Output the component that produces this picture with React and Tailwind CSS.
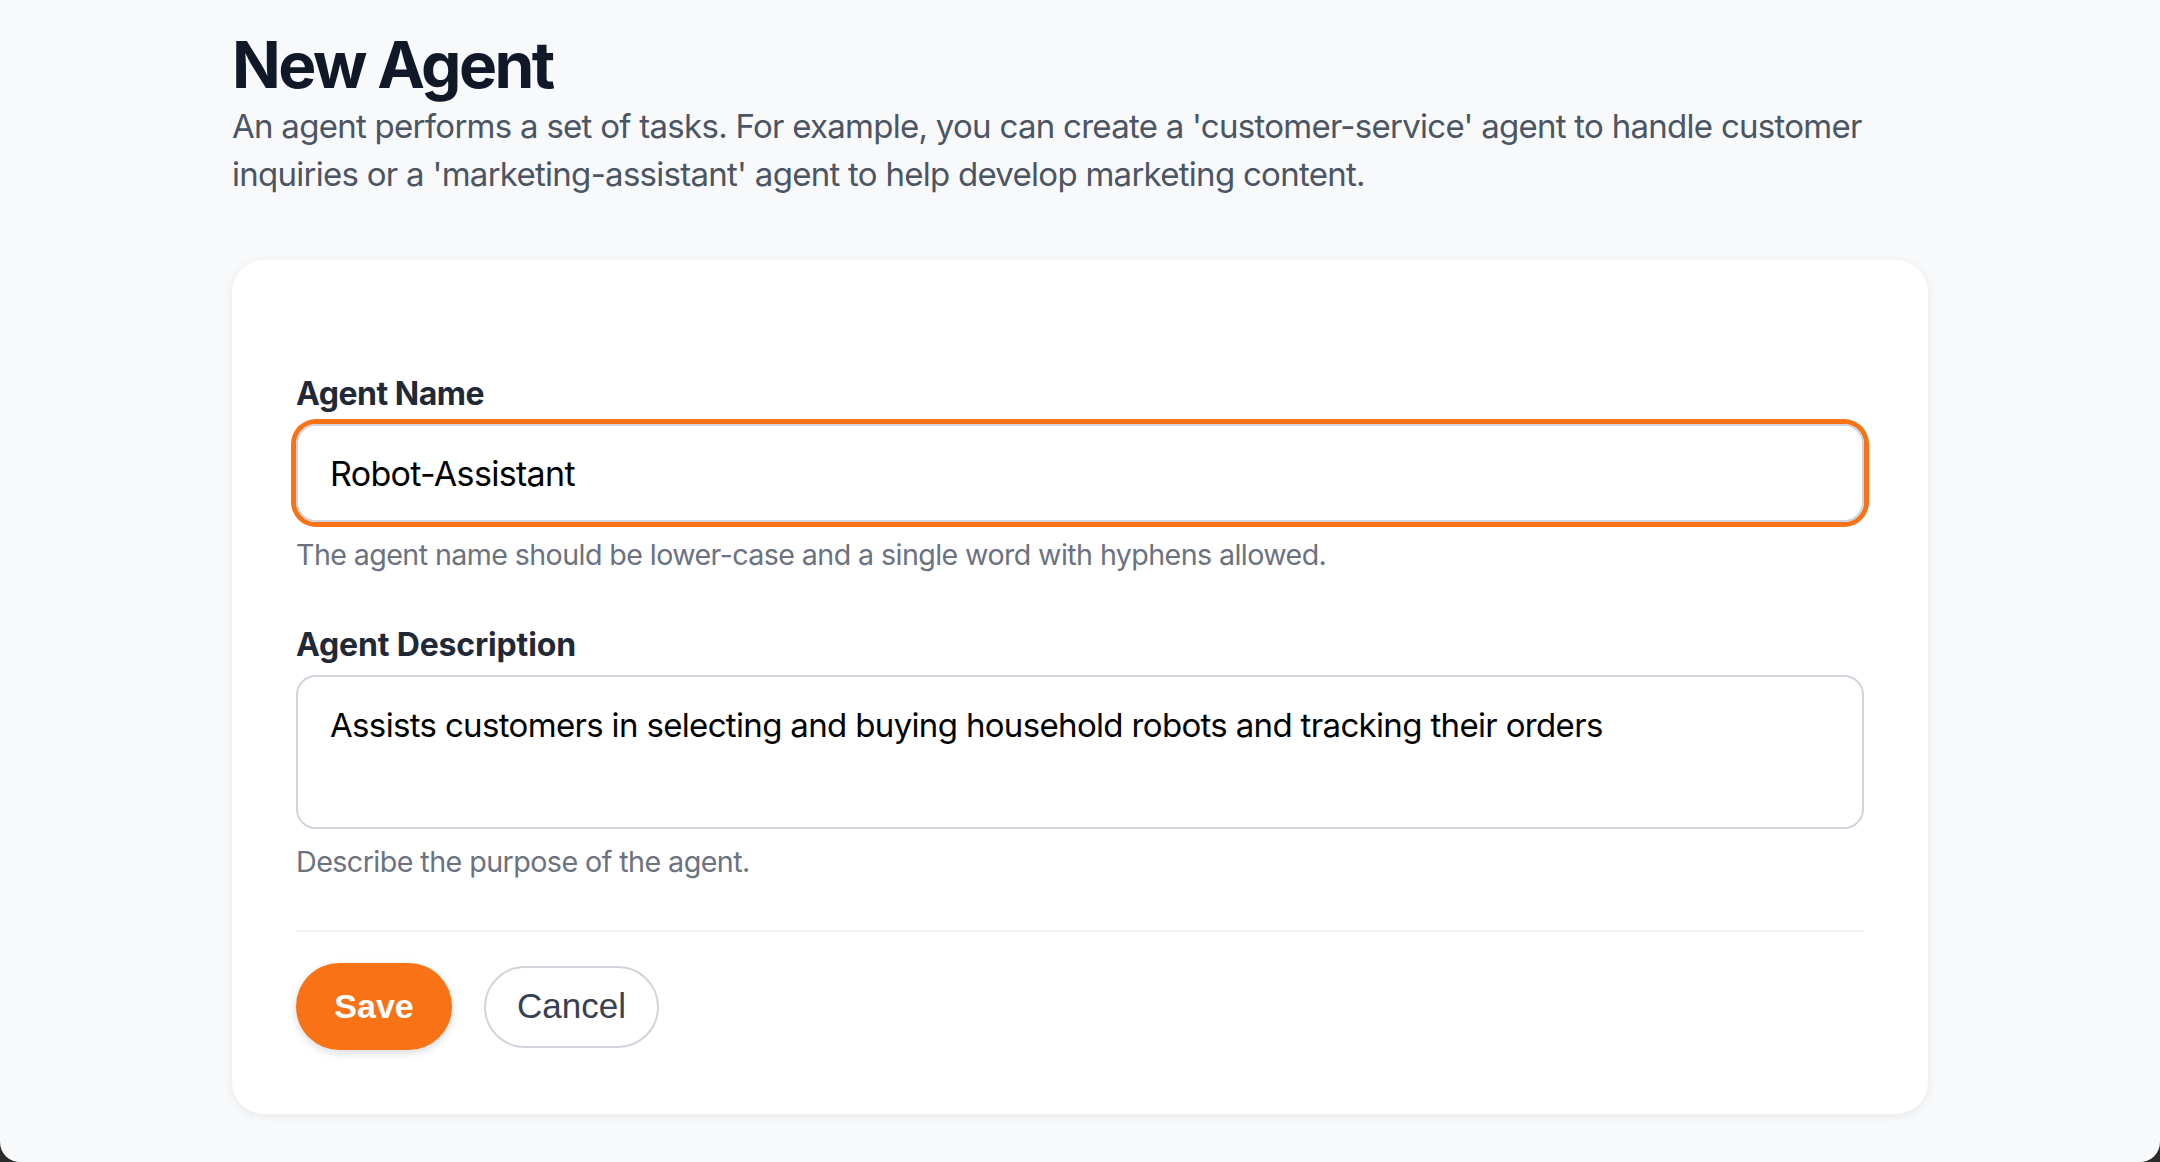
import React, { useEffect, useRef, useState } from "react";

export default function App() {
  const [name, setName] = useState("Robot-Assistant");
  const [desc, setDesc] = useState(
    "Assists customers in selecting and buying household robots and tracking their orders"
  );
  const nameRef = useRef(null);

  useEffect(() => {
    // focus name field with caret at the end
    const el = nameRef.current;
    if (el) {
      el.focus();
      el.setSelectionRange(el.value.length, el.value.length);
    }
  }, []);

  return (
    <div
      className="relative h-[1162px] w-[2160px] bg-[#f8f9fb] pt-[25px] overflow-hidden"
      style={{ fontFamily: "Inter, 'Noto Sans', sans-serif" }}
    >
      <div className="w-[1696px] mx-auto">
        {/* Header */}
        <h1 className="text-[64px] leading-[80px] font-bold tracking-[-0.04em] text-[#111827]">
          New Agent
        </h1>
        <p className="-mt-[3px] text-[33px] leading-[48px] tracking-[-0.022em] text-[#4b5563] max-w-[1700px]">
          An agent performs a set of tasks. For example, you can create a 'customer-service' agent to handle customer
          inquiries or a 'marketing-assistant' agent to help develop marketing content.
        </p>

        {/* Form card */}
        <div className="mt-[62px] bg-white rounded-[32px] shadow-[0_2px_8px_rgba(0,0,0,0.08)] px-16 pt-[110px] pb-16">
          <label className="block text-[32px] leading-[48px] font-bold tracking-[-0.015em] text-[#1f2937] mb-[6px]">
            Agent Name
          </label>
          <input
            ref={nameRef}
            value={name}
            onChange={(e) => setName(e.target.value)}
            className="block w-full h-[98px] rounded-[20px] border-2 border-[#d1d5db] ring-[5px] ring-[#f97316] px-[32px] text-[34px] tracking-[-0.02em] text-black caret-black outline-none"
          />
          <p className="mt-[13px] text-[28.6px] leading-[40px] tracking-[-0.02em] text-[#6b7280]">
            The agent name should be lower-case and a single word with hyphens allowed.
          </p>

          <label className="block mt-[46px] text-[32px] leading-[48px] font-bold tracking-[-0.005em] text-[#1f2937] mb-[6px]">
            Agent Description
          </label>
          <textarea
            value={desc}
            onChange={(e) => setDesc(e.target.value)}
            className="block w-full h-[154px] resize-none rounded-[20px] border-2 border-[#d1d5db] px-[32px] py-[24px] text-[33px] leading-[48px] tracking-[-0.02em] text-black outline-none"
          />
          <p className="mt-[13px] text-[28.7px] leading-[40px] tracking-[-0.02em] text-[#6b7280]">
            Describe the purpose of the agent.
          </p>

          <div className="mt-12 border-t-2 border-[#f3f4f6]" />

          <div className="mt-[31px] flex items-center gap-8">
            <button
              className="h-[87px] w-[156px] rounded-full bg-[#f97316] text-white text-[34px] font-bold shadow-[0_3px_8px_rgba(0,0,0,0.15)]"
              style={{ fontFamily: "'Liberation Sans', Arial, sans-serif" }}
            >
              Save
            </button>
            <button
              className="h-[82px] w-[175px] rounded-full border-2 border-[#d1d5db] bg-white text-[#374151] text-[35px]"
              style={{ fontFamily: "'Liberation Sans', Arial, sans-serif" }}
            >
              Cancel
            </button>
          </div>
        </div>
      </div>

      {/* window corners */}
      <div className="absolute bottom-0 left-0 w-5 h-5 bg-[#2b2b2b]">
        <div className="w-full h-full bg-[#f8f9fb] rounded-bl-[20px]" />
      </div>
      <div className="absolute bottom-0 right-0 w-5 h-5 bg-[#2b2b2b]">
        <div className="w-full h-full bg-[#f8f9fb] rounded-br-[20px]" />
      </div>
    </div>
  );
}
